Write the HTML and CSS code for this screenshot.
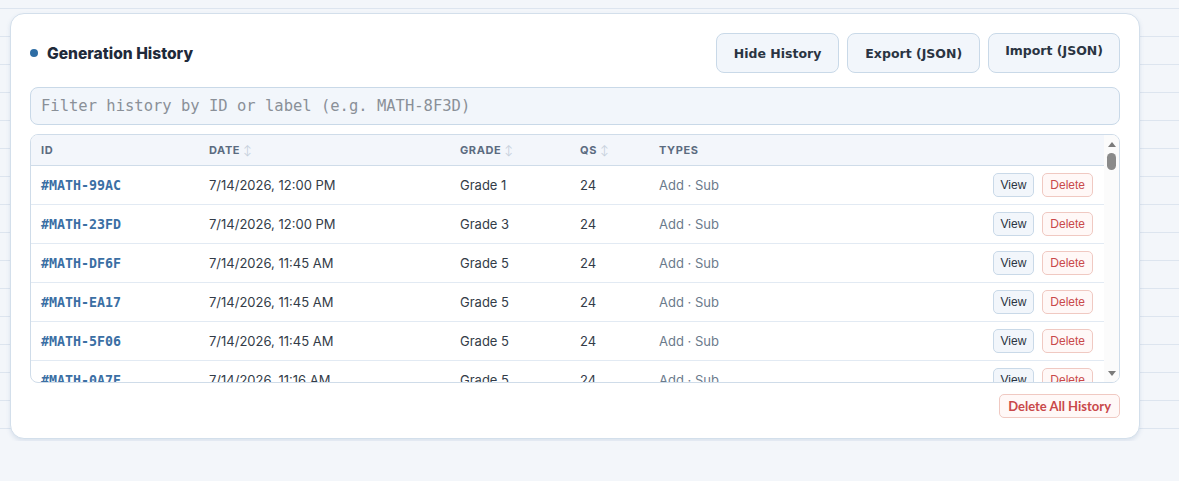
FILE: index.html
```html
<!DOCTYPE html>
<html lang="en">
<head>
    <meta charset="UTF-8">
    <meta name="viewport" content="width=device-width, initial-scale=1.0">
    <title>Generation History</title>
    <link rel="stylesheet" href="styles.css">
</head>
<body>
    <div class="page">
        <div class="card">
            <div class="head">
                <h2 class="title"><span class="dot"></span>Generation History</h2>
                <div class="actions">
                    <button class="btn">Hide History</button>
                    <button class="btn">Export (JSON)</button>
                    <label class="btn import">Import (JSON)</label>
                </div>
            </div>
            <input class="filter" type="text" placeholder="Filter history by ID or label (e.g. MATH-8F3D)">
            <div class="tablebox">
                <div class="tablescroll">
                    <table class="hist">
                        <colgroup>
                            <col style="width:168px"><col style="width:251px"><col style="width:120px"><col style="width:79px"><col><col style="width:150px">
                        </colgroup>
                        <thead>
                            <tr>
                                <th>ID</th>
                                <th>Date <span class="sort">&#8597;</span></th>
                                <th>Grade <span class="sort">&#8597;</span></th>
                                <th>Qs <span class="sort">&#8597;</span></th>
                                <th>Types</th>
                                <th></th>
                            </tr>
                        </thead>
                        <tbody>
                            <tr><td class="id">#MATH-99AC</td><td>7/14/2026, 12:00 PM</td><td>Grade 1</td><td>24</td><td class="types">Add · Sub</td><td class="ops"><button class="sm">View</button><button class="sm del">Delete</button></td></tr>
                            <tr><td class="id">#MATH-23FD</td><td>7/14/2026, 12:00 PM</td><td>Grade 3</td><td>24</td><td class="types">Add · Sub</td><td class="ops"><button class="sm">View</button><button class="sm del">Delete</button></td></tr>
                            <tr><td class="id">#MATH-DF6F</td><td>7/14/2026, 11:45 AM</td><td>Grade 5</td><td>24</td><td class="types">Add · Sub</td><td class="ops"><button class="sm">View</button><button class="sm del">Delete</button></td></tr>
                            <tr><td class="id">#MATH-EA17</td><td>7/14/2026, 11:45 AM</td><td>Grade 5</td><td>24</td><td class="types">Add · Sub</td><td class="ops"><button class="sm">View</button><button class="sm del">Delete</button></td></tr>
                            <tr><td class="id">#MATH-5F06</td><td>7/14/2026, 11:45 AM</td><td>Grade 5</td><td>24</td><td class="types">Add · Sub</td><td class="ops"><button class="sm">View</button><button class="sm del">Delete</button></td></tr>
                            <tr><td class="id">#MATH-0A7E</td><td>7/14/2026, 11:16 AM</td><td>Grade 5</td><td>24</td><td class="types">Add · Sub</td><td class="ops"><button class="sm">View</button><button class="sm del">Delete</button></td></tr>
                        </tbody>
                    </table>
                </div>
                <div class="sbar">
                    <span class="arrow up"></span>
                    <span class="thumb"></span>
                    <span class="track"></span>
                    <span class="arrow down"></span>
                </div>
            </div>
            <div class="foot">
                <button class="danger">Delete All History</button>
            </div>
        </div>
    </div>
</body>
</html>
```

FILE: styles.css
```css
body{margin: 0;background-color: #f3f6fa;font-family: "Inter", "Noto Sans", sans-serif;color: #333c48;}

        .page{
            padding: 13px 39px 2px 10px;
            background-image: linear-gradient(#dde5ef 1px, transparent 1px);
            background-size: 100% 28px;
            background-position: 0 8px;
        }
        .card{
            background-color: #fff;
            border: 1px solid #d3dfeb;
            border-radius: 14px;
            padding: 19px 19px 20px;
            box-shadow: 0 2px 4px rgba(70, 110, 160, 0.15);
        }
        .head{
            display: flex;
            justify-content: space-between;
            align-items: center;
        }
        .title{
            margin: 0;
            display: flex;
            align-items: center;
            gap: 9px;
            font-family: "Inter", sans-serif;
            font-weight: 800;
            font-size: 15.6px;
            color: #1f2a3a;
        }
        .dot{
            width: 8px;
            height: 8px;
            border-radius: 50%;
            background-color: #2e6da4;
        }
        .actions{
            display: flex;
            gap: 8px;
        }
        .btn{
            box-sizing: border-box;
            height: 40px;
            padding: 0 17px;
            display: flex;
            align-items: center;
            background-color: #f2f6fb;
            border: 1px solid #c9d9e8;
            border-radius: 8px;
            font-family: "DejaVu Sans", sans-serif;
            font-weight: 700;
            font-size: 12.5px;
            color: #2a3442;
            cursor: pointer;
        }
        .btn.import{
            padding: 0 16px 6px;
        }
        .filter{
            display: block;
            box-sizing: border-box;
            width: 100%;
            height: 38px;
            margin-top: 14px;
            padding: 0 10px;
            background-color: #f2f6fb;
            border: 1px solid #c9d9e8;
            border-radius: 8px;
            outline: none;
            font-family: "DejaVu Sans Mono", monospace;
            font-size: 15.5px;
            color: #333;
        }
        .filter::placeholder{
            color: #8a9098;
        }
        .tablebox{
            display: flex;
            margin-top: 9px;
            height: 247px;
            overflow: hidden;
            border: 1px solid #cfdce9;
            border-radius: 8px;
        }
        .tablescroll{
            flex: 1;
            overflow: hidden;
        }
        .sbar{
            width: 15px;
            display: flex;
            flex-direction: column;
            align-items: center;
            background-color: #fbfbfb;
        }
        .arrow{
            width: 0;
            height: 0;
            border-left: 4px solid transparent;
            border-right: 4px solid transparent;
        }
        .arrow.up{
            margin-top: 7px;
            border-bottom: 5px solid #7b7b7b;
        }
        .arrow.down{
            margin-bottom: 6px;
            border-top: 5px solid #7b7b7b;
        }
        .thumb{
            width: 9px;
            height: 17px;
            margin-top: 6px;
            border-radius: 5px;
            background-color: #8a8a8a;
        }
        .track{
            flex: 1;
        }
        .hist{
            width: 100%;
            border-collapse: collapse;
            table-layout: fixed;
        }
        .hist th{
            height: 30px;
            padding: 0 10px;
            text-align: left;
            background-color: #f3f6fb;
            border-bottom: 1px solid #cfdce9;
            font-size: 11px;
            font-weight: 700;
            letter-spacing: 0.6px;
            text-transform: uppercase;
            color: #5b6b80;
        }
        .sort{
            color: #c6d0dc;
            font-weight: 400;
            font-size: 10px;
        }
        .hist td{
            height: 38px;
            padding: 0 10px;
            border-bottom: 1px solid #e2eaf3;
            font-size: 13px;
            color: #333c48;
            white-space: nowrap;
        }
        .hist td.id{
            font-family: "DejaVu Sans Mono", monospace;
            font-weight: 700;
            font-size: 13.3px;
            color: #3b6fa4;
        }
        .hist td.types{
            color: #6b7a8c;
        }
        .hist td.ops{
            padding-right: 11px;
            text-align: right;
        }
        .sm{
            height: 24px;
            margin-left: 8px;
            padding: 0 7px;
            background-color: #f2f6fb;
            border: 1px solid #c9d9e8;
            border-radius: 5px;
            font-family: "Liberation Sans", Arial, sans-serif;
            font-size: 12px;
            color: #2a3442;
            cursor: pointer;
        }
        .sm.del{
            background-color: #fff8f7;
            border-color: #f0c9c2;
            color: #c9484a;
        }
        .foot{
            display: flex;
            justify-content: flex-end;
            margin-top: 11px;
        }
        .danger{
            height: 24px;
            padding: 0 8px;
            background-color: #fff8f7;
            border: 1px solid #f0c9c2;
            border-radius: 5px;
            font-family: "Lato", sans-serif;
            font-weight: 700;
            font-size: 13px;
            color: #c9484a;
            cursor: pointer;
        }
```
